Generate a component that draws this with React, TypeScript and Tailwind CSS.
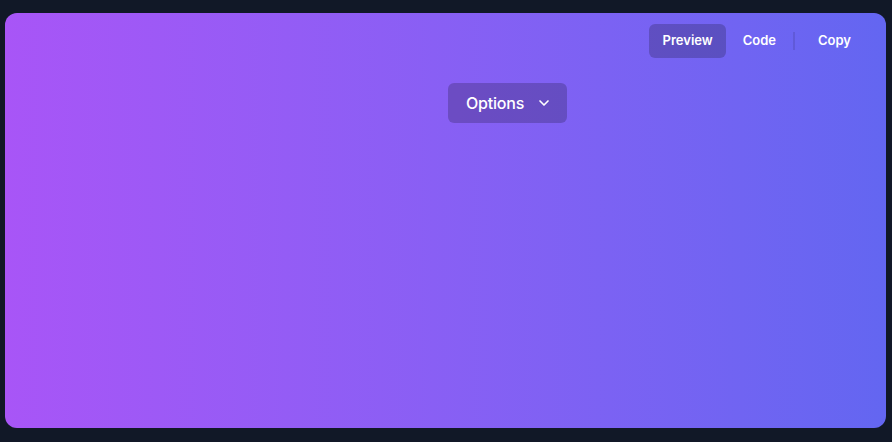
import { ChevronDown } from "lucide-react";

export default function App() {
  return (
    <div
      className="h-[442px] w-full bg-[#111827] pt-[13px] pl-[5px] pr-[6px] pb-[14px]"
      style={{ fontFamily: "Inter, 'Liberation Sans', sans-serif" }}
    >
      <div className="h-full w-full rounded-xl bg-gradient-to-r from-[#a855f7] to-[#6366f1] flex flex-col">
        <div className="flex items-center justify-end pt-[11px] pr-[21px]">
          <button className="rounded-md bg-black/20 pl-[14px] pr-[13px] h-[34px] text-[13px] font-semibold text-white">
            Preview
          </button>
          <button className="px-[17px] h-[34px] text-[13px] font-semibold text-white">
            Code
          </button>
          <div className="h-[18px] w-[2px] bg-black/10" />
          <button className="pl-[23px] pr-[14px] h-[34px] text-[13px] font-semibold text-white">
            Copy
          </button>
        </div>
        <div className="flex pl-[443px] pt-[25px]">
          <button className="flex items-center gap-[12px] rounded-md bg-black/20 pl-[18px] pr-[15px] h-[40px] text-base font-medium text-white">
            <span className="tracking-[-0.2px]">Options</span>
            <ChevronDown size={16} strokeWidth={2.5} />
          </button>
        </div>
      </div>
    </div>
  );
}
